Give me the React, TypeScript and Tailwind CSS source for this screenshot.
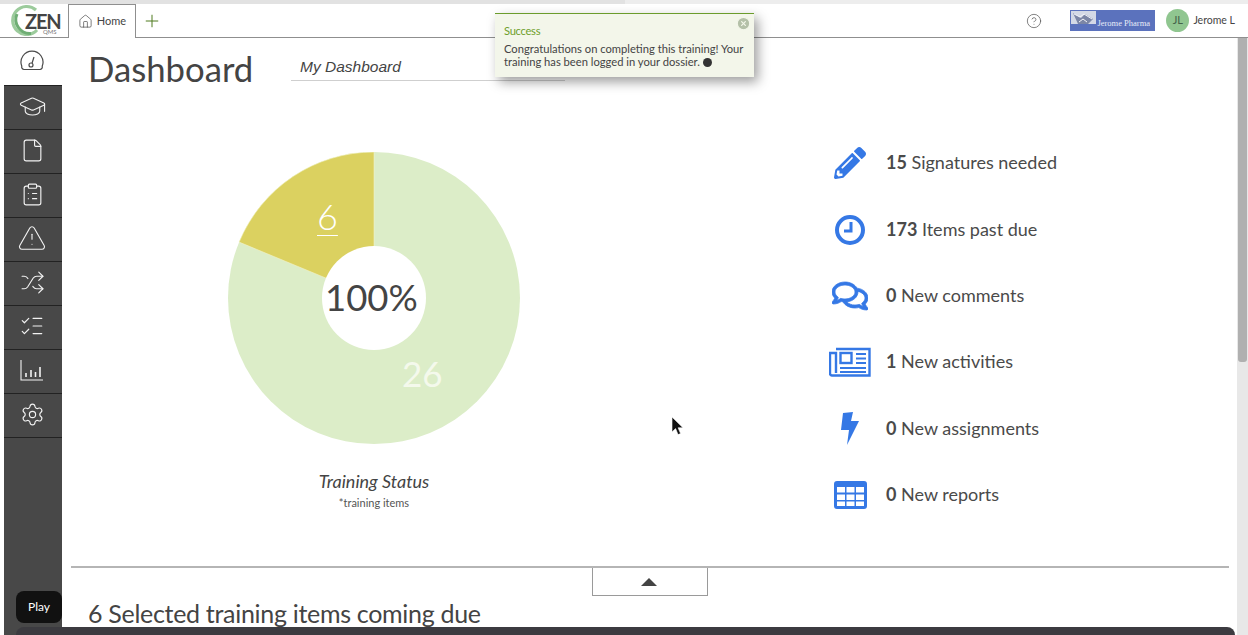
import {
  CircleHelp,
  ClipboardList,
  File,
  GraduationCap,
  House,
  ListChecks,
  Plus,
  Settings,
  Shuffle,
  TriangleAlert,
  XCircle,
} from "lucide-react"
import { FaPencilAlt, FaRegComments } from "react-icons/fa"

const lato = "font-['Lato','Noto_Sans',sans-serif]"
const blue = "#3578e5"

function Gauge() {
  return (
    <svg width="26" height="22" viewBox="0 0 26 22" fill="none" stroke="#4a4a4a" strokeWidth="1.2">
      <path d="M5 19.5h16a2.5 2.5 0 0 0 2.2-3.2A11 11 0 1 0 2.8 16.3 2.5 2.5 0 0 0 5 19.5z" />
      <circle cx="12" cy="15" r="2" />
      <path d="M13 13.2 15 7" />
    </svg>
  )
}

function BarsIcon() {
  return (
    <svg width="24" height="24" viewBox="0 0 24 24" fill="none" stroke="#f2f2f2" strokeWidth="1.1">
      <path d="M1 2v20h22" />
      <path d="M6 19v-4M11 19v-7M15.5 19v-5M20 19v-10" strokeWidth="1.6" />
    </svg>
  )
}

function ZenLogo() {
  return (
    <div className="relative w-[60px] h-[34px] shrink-0">
      <svg className="absolute left-[7px] top-0" width="32" height="32" viewBox="0 0 32 32" fill="none">
        <path d="M25 6A14 14 0 1 0 26 26" stroke="#9ccb9c" strokeWidth="3.2" />
        <path d="M6 10A14 14 0 0 0 20 29.5" stroke="#6fae74" strokeWidth="3" />
      </svg>
      <span className={`absolute left-[21px] top-[6px] text-[20px] leading-[22px] font-bold tracking-[-1.2px] text-[#444] ${lato}`}>ZEN</span>
      <span className={`absolute left-[39px] top-[24px] text-[6px] leading-[8px] text-[#777] ${lato}`}>QMS</span>
    </div>
  )
}

function CompanyLogo() {
  return (
    <div className="w-[85px] h-[21px] bg-[#5b72bd] flex items-start overflow-hidden">
      <svg width="25" height="15" viewBox="0 0 25 15" className="shrink-0 mt-[1px] ml-[1px]">
        <rect width="25" height="13" fill="#d4d9e6" />
        <path d="M2 2l8 5 4-4 8 5-5 5H7z" fill="#7c86a6" />
        <path d="M3 3l6 3 4-3 8 5M8 11l4-3 4 3" stroke="#f4f5fa" fill="none" />
      </svg>
      <span className="text-[8.5px] leading-none pt-[9px] pl-[1px] whitespace-nowrap text-[#e8ecf8] font-['Liberation_Serif',serif]">Jerome Pharma</span>
    </div>
  )
}

function Header() {
  return (
    <header className="h-[34px] shrink-0 border-b border-[#8f8f8f] flex items-center pl-[4px] bg-white relative">
      <ZenLogo />
      <div className="ml-[4px] w-[68px] h-[34px] mt-[1px] bg-white border border-b-0 border-[#8f8f8f] flex items-center justify-center gap-[4px]">
        <House size={15} strokeWidth={1.1} color="#444" />
        <span className={`text-[11px] text-[#444] ${lato}`}>Home</span>
      </div>
      <Plus size={20} strokeWidth={1.2} color="#4f7a1f" className="ml-[6px]" />
      <div className="ml-auto flex items-center pr-[13px]">
        <CircleHelp size={16} strokeWidth={1.1} color="#555" />
        <div className="w-[28px]" />
        <CompanyLogo />
        <div className="ml-[11px] w-[23px] h-[23px] rounded-full bg-[#90c690] flex items-center justify-center">
          <span className={`text-[11px] text-[#44634a] ${lato}`}>JL</span>
        </div>
        <span className={`ml-[4px] text-[10.5px] text-[#444] ${lato}`}>Jerome L</span>
      </div>
    </header>
  )
}

function Sidebar() {
  return (
    <aside className="w-[58px] ml-[4px] shrink-0 flex flex-col">
      <div className="h-[47px] flex items-center justify-center pb-[2px] pr-[2px]">
        <Gauge />
      </div>
      <div className="flex-1 bg-[#484848] border-t border-[#222]">
        <NavItem><GraduationCap size={29} strokeWidth={0.9} color="#f2f2f2" /></NavItem>
        <NavItem><File size={25} strokeWidth={1.1} color="#f2f2f2" /></NavItem>
        <NavItem><ClipboardList size={25} strokeWidth={1.1} color="#f2f2f2" /></NavItem>
        <NavItem><TriangleAlert size={30} strokeWidth={0.9} color="#f2f2f2" /></NavItem>
        <NavItem><Shuffle size={25} strokeWidth={1.1} color="#f2f2f2" /></NavItem>
        <NavItem><ListChecks size={26} strokeWidth={1.1} color="#f2f2f2" /></NavItem>
        <NavItem><BarsIcon /></NavItem>
        <NavItem><Settings size={25} strokeWidth={1.1} color="#f2f2f2" /></NavItem>
      </div>
    </aside>
  )
}

function NavItem({ children }: { children: React.ReactNode }) {
  return (
    <div className="h-[44px] border-b border-[#222] flex items-center justify-center pb-[3px] pr-[2px]">
      {children}
    </div>
  )
}

function Donut() {
  return (
    <div className="relative w-[292px] h-[292px]">
      <svg width="292" height="292" viewBox="0 0 292 292">
        <circle cx="146" cy="146" r="146" fill="#dcedc8" />
        <path d="M146 146 L146 0 A146 146 0 0 0 11.1 90.1 Z" fill="#dbd160" stroke="#f4f3c8" strokeWidth="0.6" />
        <circle cx="146" cy="146" r="52" fill="#fff" />
      </svg>
      <span className={`absolute left-[89px] top-[42px] text-[36px] leading-[44px] font-light underline decoration-1 underline-offset-[5px] text-white ${lato}`}>6</span>
      <span className={`absolute left-[174px] top-[200px] text-[35px] leading-[42px] text-[#f4f9ec] ${lato}`}>26</span>
      <span className={`absolute left-[97px] top-[122px] text-[36.5px] leading-[46px] text-[#444] ${lato}`}>100%</span>
    </div>
  )
}

function ClockIcon() {
  return (
    <svg width="32" height="32" viewBox="0 0 32 32" fill="none" stroke={blue} strokeWidth="4">
      <circle cx="16" cy="16" r="13" />
      <path d="M17 8v9h-7" strokeWidth="3" />
    </svg>
  )
}

function NewsIcon() {
  return (
    <svg width="42" height="30" viewBox="0 0 42 30" fill="none" stroke={blue} className="shrink-0">
      <path d="M7 2h33.5v26.5H3a2 2 0 0 1-2-2V6h6v20" strokeWidth="2.4" />
      <rect x="11.5" y="6" width="11" height="10" strokeWidth="2.4" />
      <path d="M27 7h10M27 11.5h10M27 16h10M11 21h26M11 25h26" strokeWidth="2.2" />
    </svg>
  )
}

function BoltIcon() {
  return (
    <svg width="20" height="36" viewBox="0 0 20 36" fill={blue}>
      <path d="M3 2 13 1l-2 9h8L7 34l2-15H1z" />
    </svg>
  )
}

function TableIcon() {
  return (
    <svg width="33" height="28" viewBox="0 0 33 28" fill={blue}>
      <path fillRule="evenodd" d="M3 0h27a3 3 0 0 1 3 3v22a3 3 0 0 1-3 3H3a3 3 0 0 1-3-3V3a3 3 0 0 1 3-3zM3 6v5.5h8V6zm9.5 0v5.5h8V6zM22 6v5.5h8V6zM3 13.5V19h8v-5.5zm9.5 0V19h8v-5.5zm9.5 0V19h8v-5.5zM3 20.5V25h8v-4.5zm9.5 0V25h8v-4.5zm9.5 0V25h8v-4.5z" />
    </svg>
  )
}

const stats = [
  { n: "15", label: "Signatures needed", icon: <FaPencilAlt size={32} color={blue} className="shrink-0" /> },
  { n: "173", label: "Items past due", icon: <ClockIcon /> },
  { n: "0", label: "New comments", icon: <FaRegComments size={36} color={blue} stroke={blue} strokeWidth={12} className="shrink-0" /> },
  { n: "1", label: "New activities", icon: <NewsIcon /> },
  { n: "0", label: "New assignments", icon: <BoltIcon /> },
  { n: "0", label: "New reports", icon: <TableIcon /> },
]

function Stats() {
  return (
    <ul>
      {stats.map((s) => (
        <li key={s.label} className="h-[66.4px] flex items-center">
          <span className="w-[34px] flex justify-center">{s.icon}</span>
          <span className={`ml-[19px] pb-[1px] text-[18px] text-[#4a4a4a] ${lato}`}>
            <b className="font-bold">{s.n}</b> {s.label}
          </span>
        </li>
      ))}
    </ul>
  )
}

function Toast() {
  return (
    <div className={`absolute left-[495px] top-[13px] w-[259px] h-[64px] bg-[#f3f6ea] border-t border-[#6b9c2c] shadow-[4px_5px_11px_rgba(0,0,0,0.38)] pl-[9px] pt-[10px] text-[#444] ${lato}`}>
      <XCircle size={15} color="#f3f6ea" fill="#b4c0a8" strokeWidth={2} className="absolute right-[3px] top-[2px]" />
      <p className="text-[11.2px] leading-[13px] tracking-[-0.3px] text-[#6f9f2d]">Success</p>
      <p className="mt-[5px] text-[11.2px] leading-[13px] whitespace-nowrap">
        Congratulations on completing this training! Your
        <br />
        training has been logged in your dossier.{" "}
        <span className="inline-block w-[9px] h-[9px] rounded-full bg-[#333] align-[-1px]" />
      </p>
    </div>
  )
}

export default function App() {
  return (
    <div className="relative w-[1248px] h-[635px] overflow-hidden bg-white flex flex-col">
      <div className="h-[4px] shrink-0 flex">
        <div className="w-[625px] bg-[#e2e2e2]" />
        <div className="flex-1 bg-[#ededed]" />
      </div>
      <Header />
      <div className="flex-1 flex min-h-0">
        <Sidebar />
        <main className="flex-1 min-w-0 flex flex-col">
          <div className="flex pl-[26px] pt-[9px] items-start">
            <h1 className={`w-[203px] text-[34.7px] leading-[44px] text-[#444] ${lato}`}>Dashboard</h1>
            <div className="w-[274px] h-[34px] border-b border-[#cfcfcf] pl-[9px] pt-[9px]">
              <span className="block text-[15.5px] leading-[22px] italic text-[#444] font-['Liberation_Sans',sans-serif]">My Dashboard</span>
            </div>
          </div>
          <div className="flex mt-[39px] h-[436px]">
            <div className="ml-[166px] w-[292px] pt-[22px] flex flex-col items-center">
              <Donut />
              <p className={`mt-[26px] text-[18px] leading-[22px] italic text-[#444] ${lato}`}>Training Status</p>
              <p className={`mt-[4px] text-[11px] leading-[14px] text-[#555] ${lato}`}>*training items</p>
            </div>
            <div className="ml-[313px]">
              <Stats />
            </div>
          </div>
          <div className="ml-[9px] w-[1158px] h-[2px] shrink-0 bg-[#b5b5b5]" />
          <div className="ml-[530px] w-[116px] h-[28px] shrink-0 border border-t-0 border-[#9a9a9a] flex items-center justify-center pr-[3px]">
            <div className="w-0 h-0 border-x-[8px] border-x-transparent border-b-[8px] border-b-[#444]" />
          </div>
          <h2 className={`ml-[26px] mt-[1px] text-[25px] leading-[32px] tracking-[-0.3px] whitespace-nowrap text-[#444] ${lato}`}>
            6 Selected training items coming due
          </h2>
        </main>
        <div className="w-[11px] shrink-0 bg-[#e8e8e8]">
          <div className="w-[9px] ml-[1px] h-[324px] bg-[#b0b0b0] rounded-b-[3px]" />
        </div>
      </div>
      <Toast />
      <div className={`absolute left-[16px] top-[591px] w-[46px] h-[32px] rounded-[8px] bg-[#111] flex items-center justify-center text-[12px] text-white ${lato}`}>Play</div>
      <div className="absolute left-[16px] top-[627px] w-[1219px] h-[8px] rounded-t-[8px] bg-[#3c3b40]" />
      <svg className="absolute left-[670px] top-[416px]" width="14" height="20" viewBox="0 0 14 20">
        <path d="M2 1v15l3.6-3.4 2.4 6 2.6-1-2.5-5.8H13z" fill="#111" stroke="#fff" strokeWidth="0.6" />
      </svg>
    </div>
  )
}
